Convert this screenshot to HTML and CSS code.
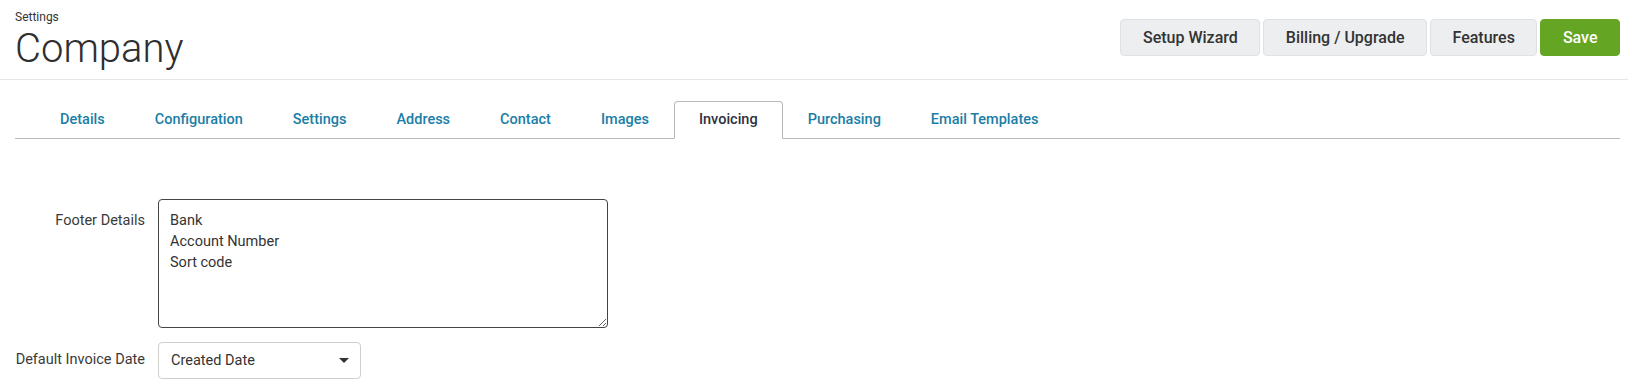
FILE: index.html
```
<!DOCTYPE html>
<html lang="en">
<head>
  <meta charset="UTF-8" />
  <meta name="viewport" content="width=device-width, initial-scale=1.0" />
  <title>Settings - Company</title>
  <link rel="stylesheet" href="styles.css">
</head>
<body>
  <div class="header">
    <div class="title">
      <div class="crumb">Settings</div>
      <h1>Company</h1>
    </div>
    <div class="actions">
      <button class="btn">Setup Wizard</button>
      <button class="btn">Billing / Upgrade</button>
      <button class="btn">Features</button>
      <button class="btn btn-save">Save</button>
    </div>
  </div>

  <ul class="tabs">
    <li><a href="#">Details</a></li>
    <li><a href="#">Configuration</a></li>
    <li><a href="#">Settings</a></li>
    <li><a href="#">Address</a></li>
    <li><a href="#">Contact</a></li>
    <li><a href="#">Images</a></li>
    <li class="active"><a href="#">Invoicing</a></li>
    <li><a href="#">Purchasing</a></li>
    <li><a href="#">Email Templates</a></li>
  </ul>

  <div class="form">
    <label for="footer" class="label-area">Footer Details</label>
    <textarea id="footer">Bank
Account Number
Sort code</textarea>

    <label for="date" class="label-select">Default Invoice Date</label>
    <div class="select-wrap">
      <select id="date">
        <option selected>Created Date</option>
        <option>Due Date</option>
      </select>
    </div>
  </div>
</body>
</html>
```

FILE: styles.css
```
body {
  margin: 0;
  font-family: Roboto, "Liberation Sans", sans-serif;
  color: #333;
  background: white;
}
.header {
  display: flex;
  justify-content: space-between;
  align-items: flex-start;
  padding: 10px 8px 6px 15px;
  border-bottom: 1px solid #e6e6e6;
}
.crumb {
  font-size: 12px;
  line-height: 15px;
  color: #333;
}
h1 {
  margin: 0;
  font-size: 40px;
  font-weight: 300;
  line-height: 48px;
  color: #2e2e2e;
}
.actions {
  display: flex;
  gap: 3px;
  margin-top: 9px;
}
.btn {
  font-family: Roboto, "Liberation Sans", sans-serif;
  font-size: 16px;
  font-weight: 500;
  line-height: 19px;
  padding: 8px 21.5px;
  color: #333;
  background: #eceef0;
  border: 1px solid #dfe2e5;
  border-radius: 4px;
  cursor: pointer;
}
.btn-save {
  background: #65a524;
  border-color: #65a524;
  color: white;
}
.tabs {
  display: flex;
  list-style: none;
  margin: 21px 8px 0 15px;
  padding: 0 0 0 20px;
  border-bottom: 1px solid #b8b8b8;
}
.tabs li {
  margin-bottom: -1px;
  border: 1px solid transparent;
  border-radius: 4px 4px 0 0;
}
.tabs a {
  display: block;
  padding: 8px 24px;
  font-size: 14.5px;
  font-weight: 500;
  line-height: 20px;
  color: #1b7ea6;
  text-decoration: none;
}
.tabs li.active {
  border-color: #b8b8b8;
  border-bottom-color: white;
  background: white;
}
.tabs li.active a {
  color: #2f3040;
}
.form {
  display: grid;
  grid-template-columns: 130px auto;
  column-gap: 13px;
  row-gap: 14px;
  justify-content: start;
  margin-top: 60px;
  padding-left: 15px;
  font-size: 14.5px;
}
.form label {
  text-align: right;
  white-space: nowrap;
  line-height: 21px;
  color: #3a3a3a;
}
.label-area {
  padding-top: 11px;
}
.label-select {
  padding-top: 7px;
}
textarea {
  width: 450px;
  height: 129px;
  box-sizing: border-box;
  padding: 10px 11px;
  font-family: Roboto, "Liberation Sans", sans-serif;
  font-size: 14.5px;
  line-height: 21px;
  color: #333;
  border: 1px solid #444;
  border-radius: 4px;
  outline: none;
}
.select-wrap {
  position: relative;
  width: 203px;
}
.select-wrap::after {
  content: "";
  position: absolute;
  right: 12px;
  top: 16px;
  border-left: 5px solid transparent;
  border-right: 5px solid transparent;
  border-top: 5px solid #333;
  pointer-events: none;
}
select {
  appearance: none;
  width: 203px;
  height: 37px;
  padding: 0 12px;
  font-family: Roboto, "Liberation Sans", sans-serif;
  font-size: 14.5px;
  color: #333;
  background: white;
  border: 1px solid #cfcfcf;
  border-radius: 4px;
}
```
